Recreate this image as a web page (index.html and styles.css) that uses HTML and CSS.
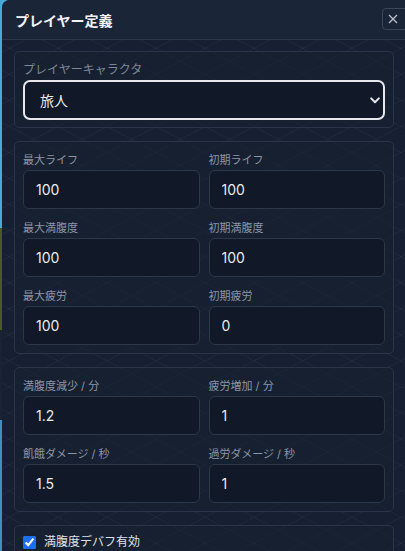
FILE: index.html
```html
<!DOCTYPE html>
<html lang="ja">
<head>
	<meta charset="UTF-8">
	<title>プレイヤー定義</title>
	<link rel="stylesheet" href="styles.css">
</head>
<body>
	<div class="modal">
		<div class="modal-head">
			<h2 class="modal-title">プレイヤー定義</h2>
			<button class="close-btn" type="button">
				<svg width="10" height="10" viewBox="0 0 10 10"><path d="M1 1 L9 9 M9 1 L1 9" stroke="#b8c0cc" stroke-width="1.3" fill="none"/></svg>
			</button>
		</div>
		<div class="modal-body">
			<div class="group first">
				<label class="field-label big">プレイヤーキャラクタ</label>
				<div class="select-wrap">
					<select class="select">
						<option>旅人</option>
					</select>
					<svg class="chevron" width="10" height="7" viewBox="0 0 10 7"><path d="M1.2 1.4 L5 5.2 L8.8 1.4" stroke="#e5e7eb" stroke-width="2" fill="none" stroke-linecap="round" stroke-linejoin="round"/></svg>
				</div>
			</div>

			<div class="group grid">
				<div class="field">
					<label class="field-label">最大ライフ</label>
					<input class="input" value="100">
				</div>
				<div class="field">
					<label class="field-label">初期ライフ</label>
					<input class="input" value="100">
				</div>
				<div class="field">
					<label class="field-label">最大満腹度</label>
					<input class="input" value="100">
				</div>
				<div class="field">
					<label class="field-label">初期満腹度</label>
					<input class="input" value="100">
				</div>
				<div class="field">
					<label class="field-label">最大疲労</label>
					<input class="input" value="100">
				</div>
				<div class="field">
					<label class="field-label">初期疲労</label>
					<input class="input" value="0">
				</div>
			</div>

			<div class="group grid">
				<div class="field">
					<label class="field-label">満腹度減少 / 分</label>
					<input class="input" value="1.2">
				</div>
				<div class="field">
					<label class="field-label">疲労増加 / 分</label>
					<input class="input" value="1">
				</div>
				<div class="field">
					<label class="field-label">飢餓ダメージ / 秒</label>
					<input class="input" value="1.5">
				</div>
				<div class="field">
					<label class="field-label">過労ダメージ / 秒</label>
					<input class="input" value="1">
				</div>
			</div>

			<div class="group check-group">
				<label class="check">
					<input type="checkbox" checked>
					<span>満腹度デバフ有効</span>
				</label>
			</div>
		</div>
	</div>
</body>
</html>
```

FILE: styles.css
```css
* {
	box-sizing: border-box;
	margin: 0;
	padding: 0;
}

html, body {
	height: 100%;
	overflow: hidden;
}

body {
	font-family: "Inter", "Noto Sans CJK JP", sans-serif;
	background: linear-gradient(#4aa8d8 0, #4aa8d8 228px, #4b5a22 228px, #4b5a22 330px, #1a2233 330px, #1a2233 420px, #3f8fc0 420px);
	padding-left: 2px;
}

.modal {
	width: 406px;
	height: 100%;
	background-color: #182133;
	border-top-left-radius: 8px;
	overflow: hidden;
}

.modal-head {
	display: flex;
	align-items: center;
	justify-content: space-between;
	height: 40px;
	padding: 0 0 0 13px;
	background: #1b2538;
	border-bottom: 1px solid #2b3649;
}

.modal-title {
	font-size: 14px;
	font-weight: bold;
	color: #f1f3f6;
}

.close-btn {
	display: flex;
	align-items: center;
	justify-content: center;
	width: 26px;
	height: 22px;
	margin-top: -2px;
	background: transparent;
	border: 1px solid #3a4659;
	border-radius: 4px;
	padding-right: 4px;
}

.modal-body {
	display: flex;
	flex-direction: column;
	gap: 13px;
	padding: 11px 14px 0 12px;
	background-color: #172032;
	background-image:
		repeating-linear-gradient(28deg, transparent 0, transparent 22px, rgba(255,255,255,0.03) 22px, rgba(255,255,255,0.03) 23px),
		repeating-linear-gradient(-28deg, transparent 0, transparent 22px, rgba(255,255,255,0.03) 22px, rgba(255,255,255,0.03) 23px);
	height: 100%;
}

.group {
	border: 1px solid #29344a;
	border-radius: 5px;
	padding: 10px 8px 8px;
	background: rgba(24, 32, 50, 0.55);
}

.group.first {
	padding-bottom: 7px;
}

.grid {
	display: grid;
	grid-template-columns: 1fr 1fr;
	column-gap: 9px;
	row-gap: 11px;
}

.field-label {
	display: block;
	font-size: 11px;
	line-height: 16px;
	margin-bottom: 2px;
	color: #8c96a6;
}

.field-label.big {
	font-size: 12px;
	line-height: 16px;
	margin-bottom: 2px;
	color: #7d8797;
}

.input {
	display: block;
	width: 100%;
	height: 39px;
	padding: 0 12px;
	font-family: "Inter", sans-serif;
	font-size: 14px;
	color: #e8eaee;
	background: #111827;
	border: 1px solid #2c374a;
	border-radius: 6px;
	outline: none;
}

.select-wrap {
	position: relative;
}

.select {
	display: block;
	width: 100%;
	height: 40px;
	padding: 0 15px;
	font-family: "Inter", "Noto Sans CJK JP", sans-serif;
	font-size: 14px;
	color: #e8eaee;
	background: #111827;
	border: 2px solid #e6e8ec;
	border-radius: 7px;
	appearance: none;
	-webkit-appearance: none;
	outline: none;
}

.chevron {
	position: absolute;
	right: 5px;
	top: 17px;
}

.check-group {
	padding: 8px 8px 10px;
}

.check {
	display: flex;
	align-items: center;
	gap: 8px;
	font-size: 12px;
	line-height: 16px;
	color: #dfe3e8;
}

.check input {
	width: 13px;
	height: 13px;
	accent-color: #1a6ff0;
}
```
